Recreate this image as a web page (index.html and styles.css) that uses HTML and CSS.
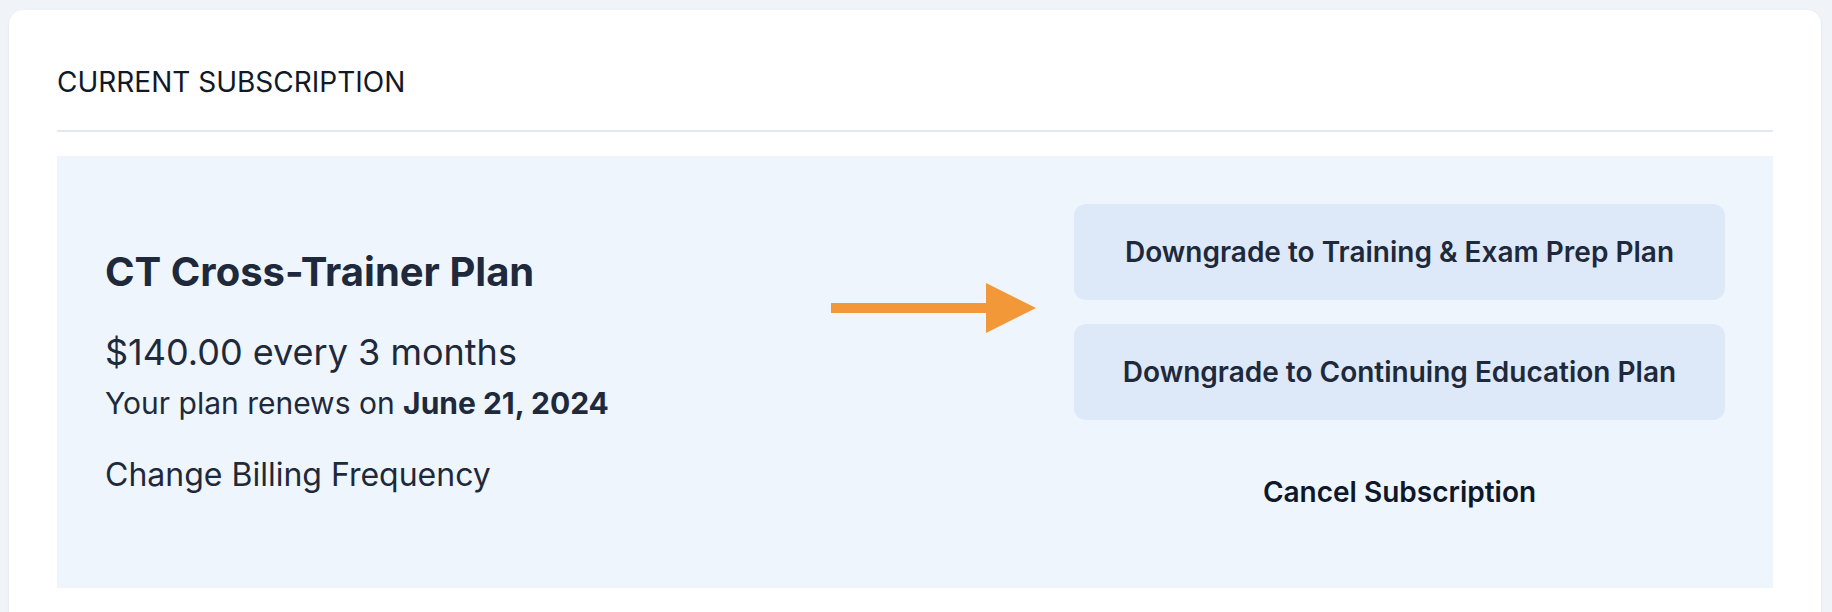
FILE: index.html
```html
<!DOCTYPE html>
<html>
<head>
  <title>Current Subscription</title>
  <link rel="stylesheet" href="styles.css">
</head>
<body>
  <div class="card">
    <h2 class="card-header">CURRENT SUBSCRIPTION</h2>
    <div class="plan-panel">
      <div class="plan-info">
        <h3 class="plan-name">CT Cross-Trainer Plan</h3>
        <p class="plan-price">$140.00 every 3 months</p>
        <p class="plan-renew">Your plan renews on <strong>June 21, 2024</strong></p>
        <a href="#" class="billing-link">Change Billing Frequency</a>
      </div>
      <div class="plan-actions">
        <button class="action-button">Downgrade to Training &amp; Exam Prep Plan</button>
        <button class="action-button">Downgrade to Continuing Education Plan</button>
        <button class="cancel-button">Cancel Subscription</button>
      </div>
      <svg class="pointer-arrow" width="205" height="50" viewBox="0 0 205 50">
        <rect x="0" y="20" width="157" height="10" fill="#f29838"/>
        <polygon points="155,0 205,25 155,50" fill="#f29838"/>
      </svg>
    </div>
  </div>
</body>
</html>
```

FILE: styles.css
```css
body {
  font-family: Inter, "Noto Sans", sans-serif;
  background-color: #f0f4f8;
  margin: 0;
  padding: 10px 11px 0 9px;
  color: #1e293b;
}

.card {
  background-color: #fff;
  border-radius: 14px 14px 0 0;
  box-shadow: 0 1px 3px rgba(15, 23, 42, 0.08);
  padding: 0 48px 24px 48px;
  height: 620px;
  box-sizing: border-box;
}

.card-header {
  margin: 0;
  padding: 54px 0 30px 0;
  font-size: 28px;
  line-height: 36px;
  font-weight: 400;
  color: #111827;
  border-bottom: 2px solid #e2e8f0;
}

.plan-panel {
  position: relative;
  margin-top: 24px;
  background-color: #eef5fd;
  padding: 48px;
  display: flex;
  align-items: center;
  justify-content: space-between;
}

.plan-name {
  margin: 0 0 35px 0;
  font-size: 40px;
  line-height: 48px;
  font-weight: 700;
  color: #1e293b;
}

.plan-price {
  margin: 0 0 9px 0;
  font-size: 36px;
  line-height: 42px;
}

.plan-renew {
  margin: 0;
  font-size: 30px;
  line-height: 42px;
}

.plan-renew strong {
  font-weight: 700;
}

.billing-link {
  display: block;
  margin-top: 30px;
  font-size: 32px;
  line-height: 42px;
  color: #1e293b;
  text-decoration: none;
}

.plan-actions {
  width: 651px;
  display: flex;
  flex-direction: column;
  gap: 24px;
}

.action-button,
.cancel-button {
  height: 96px;
  border: none;
  border-radius: 12px;
  font-family: inherit;
  font-size: 28px;
  font-weight: 600;
  cursor: pointer;
}

.action-button {
  background-color: #dde8f9;
  color: #1e293b;
}

.cancel-button {
  background: none;
  color: #0f172a;
}

.pointer-arrow {
  position: absolute;
  left: 774px;
  top: 127px;
}
```
